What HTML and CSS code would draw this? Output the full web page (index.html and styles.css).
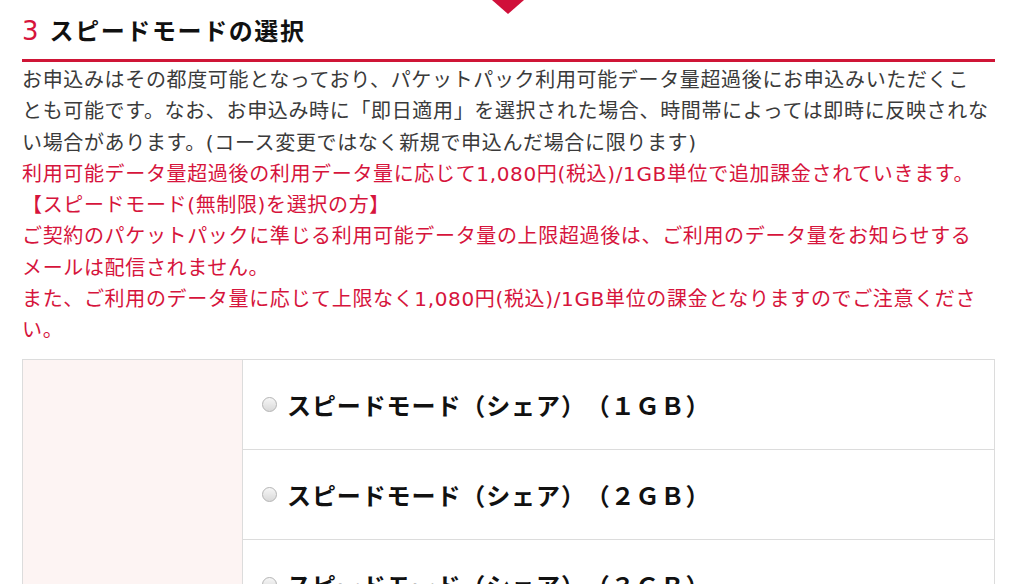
FILE: index.html
```html
<!DOCTYPE html>
<html lang="ja">
<head>
<meta charset="utf-8">
<title>スピードモードの選択</title>
<link rel="stylesheet" href="styles.css">
</head>
<body>
<div class="step-arrow"></div>
<section class="section">
  <h2 class="heading"><span class="num">3</span><span class="title">スピードモードの選択</span></h2>
  <p class="lead">お申込みはその都度可能となっており、パケットパック利用可能データ量超過後にお申込みいただくこ<br>とも可能です。なお、お申込み時に「即日適用」を選択された場合、時間帯によっては即時に反映されな<br>い場合があります。(コース変更ではなく新規で申込んだ場合に限ります)<br><span class="note">利用可能データ量超過後の利用データ量に応じて1,080円(税込)/1GB単位で追加課金されていきます。<br>【スピードモード(無制限)を選択の方】<br>ご契約のパケットパックに準じる利用可能データ量の上限超過後は、ご利用のデータ量をお知らせする<br>メールは配信されません。<br>また、ご利用のデータ量に応じて上限なく1,080円(税込)/1GB単位の課金となりますのでご注意くださ<br>い。</span></p>
  <div class="options">
    <div class="options-head"></div>
    <div class="options-list">
      <label class="option"><input type="radio" name="speed" class="radio"><span class="option-text">スピードモード（シェア）（１ＧＢ）</span></label>
      <label class="option"><input type="radio" name="speed" class="radio"><span class="option-text">スピードモード（シェア）（２ＧＢ）</span></label>
      <label class="option"><input type="radio" name="speed" class="radio"><span class="option-text">スピードモード（シェア）（３ＧＢ）</span></label>
    </div>
  </div>
</section>
</body>
</html>
```
FILE: styles.css
```css
html, body {
  margin: 0;
  padding: 0;
  background: #fff;
}
body {
  font-family: "DejaVu Sans", "Noto Sans CJK JP", sans-serif;
  color: #333;
  overflow: hidden;
}
.step-arrow {
  position: absolute;
  left: 492px;
  top: 0;
  width: 0;
  height: 0;
  border-left: 16px solid transparent;
  border-right: 16px solid transparent;
  border-top: 14px solid #d0103a;
}
.section {
  margin: 0 29px 0 22px;
}
.heading {
  display: flex;
  align-items: baseline;
  gap: 11px;
  margin: 0;
  padding: 12px 0 10px;
  line-height: 36px;
  border-bottom: 3px solid #cf1536;
}
.num {
  font-size: 26px;
  font-weight: normal;
  color: #d6143c;
  font-family: "DejaVu Sans", sans-serif;
}
.title {
  font-family: "Noto Sans CJK JP", sans-serif;
  font-size: 24px;
  font-weight: bold;
  letter-spacing: 1.6px;
  color: #111;
}
.lead {
  margin: 3px 0 0;
  font-size: 20px;
  line-height: 31.25px;
  letter-spacing: 0.65px;
  white-space: nowrap;
  color: #3a3a3a;
}
.note {
  color: #d6143c;
}
.options {
  display: flex;
  margin-top: 13px;
  border: 1px solid #dcdcdc;
  border-bottom: none;
}
.options-head {
  width: 219px;
  flex: none;
  background: #fdf4f3;
  border-right: 1px solid #dcdcdc;
}
.options-list {
  flex: 1;
  display: flex;
  flex-direction: column;
}
.option {
  display: flex;
  align-items: center;
  gap: 10px;
  height: 89px;
  padding-left: 19px;
  border-bottom: 1px solid #dcdcdc;
}
.radio {
  appearance: none;
  -webkit-appearance: none;
  margin: 0;
  width: 15px;
  height: 15px;
  border-radius: 50%;
  border: 1px solid #b4b4b4;
  background: linear-gradient(#f6f6f6, #d9d9d9);
  box-sizing: border-box;
  flex: none;
}
.option-text {
  font-family: "Noto Sans CJK JP", sans-serif;
  font-size: 24px;
  font-weight: bold;
  letter-spacing: 0.9px;
  text-spacing-trim: space-all;
  color: #111;
}
```
